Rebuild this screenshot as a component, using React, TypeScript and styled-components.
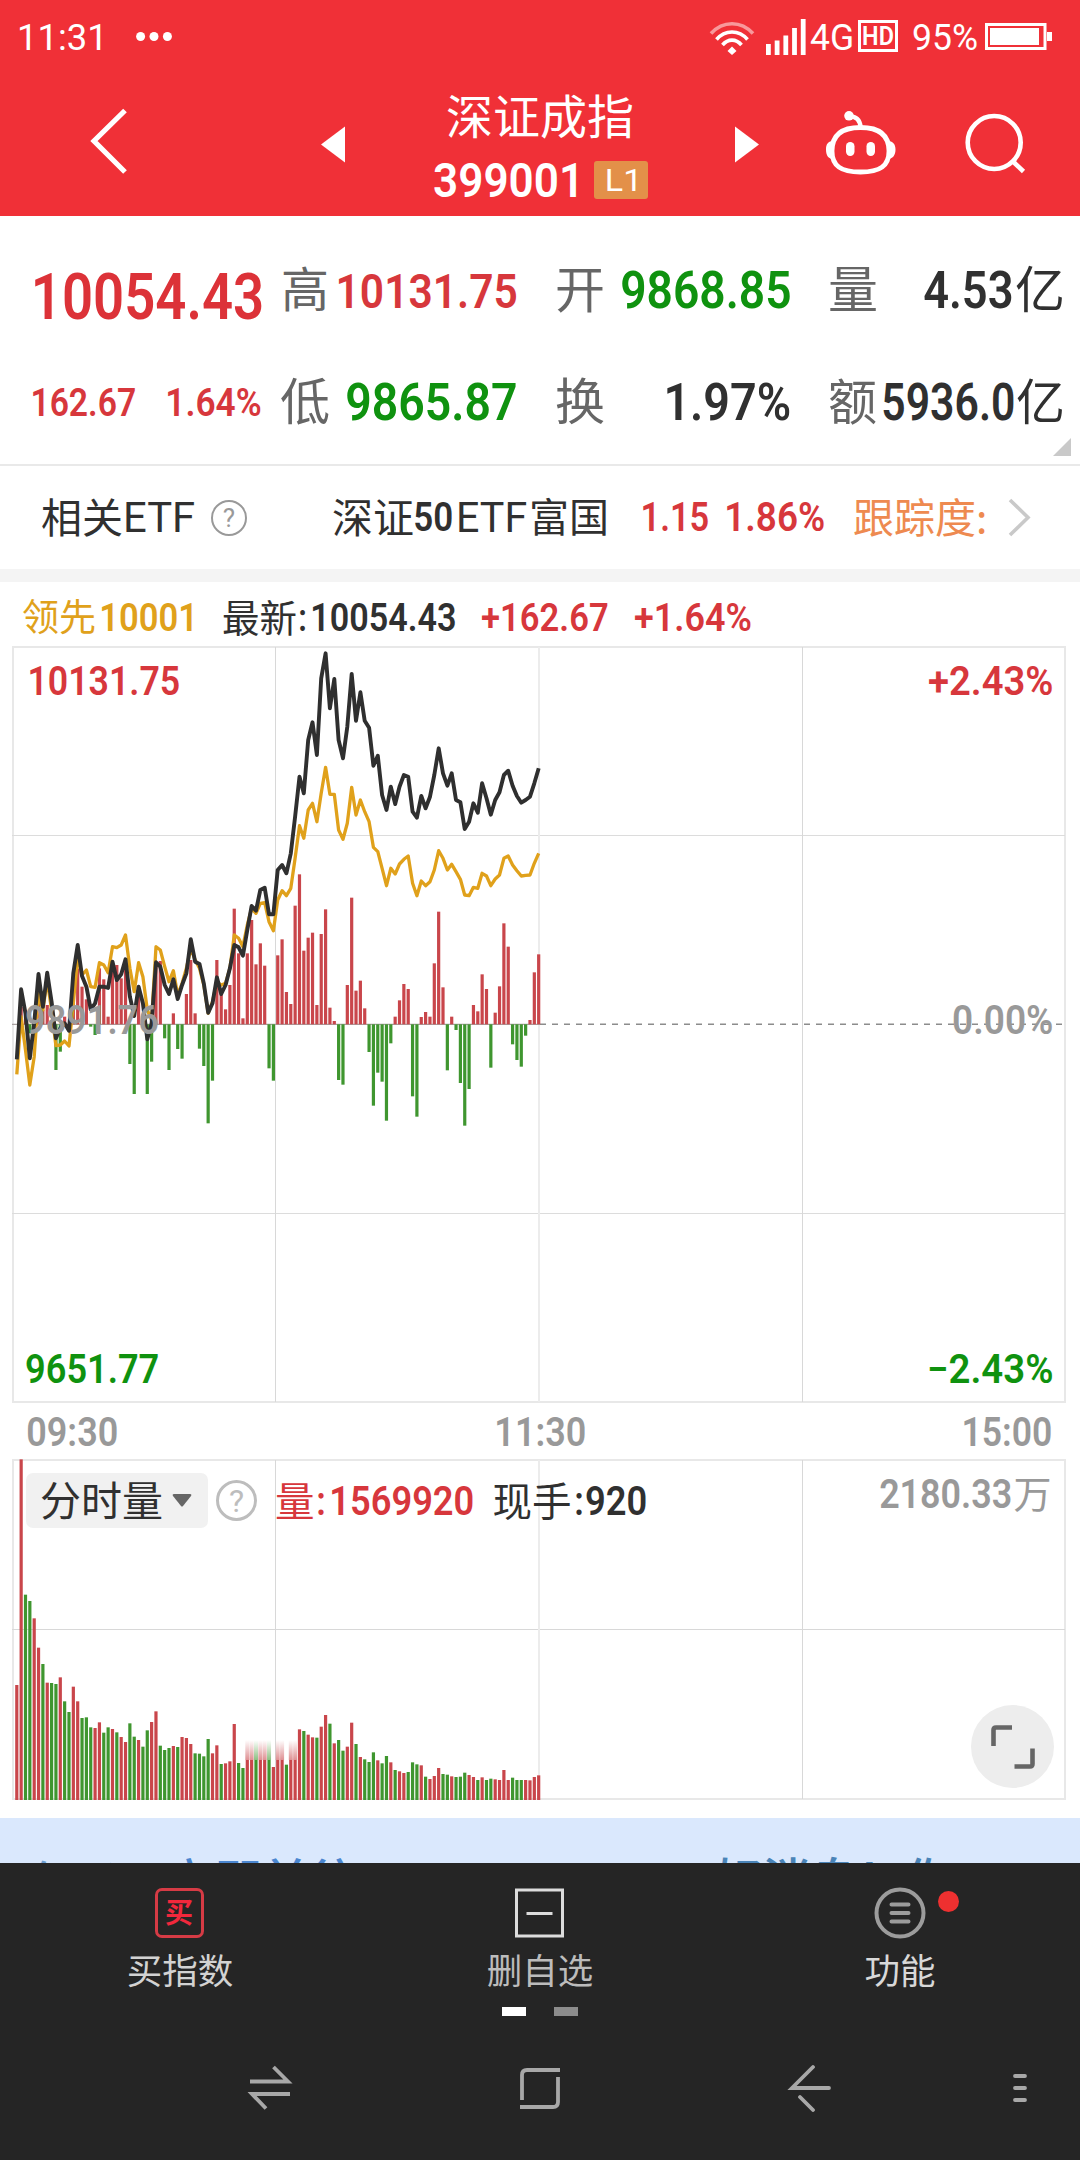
import React, { useMemo } from 'react';
import styled, { createGlobalStyle } from 'styled-components';

const RED = '#d7373c';
const GREEN = '#0f920f';
const INK = '#303030';
const GREY = '#999999';
const BAR_UP = '#c9464b';
const BAR_DOWN = '#3f962f';
const GOLD = '#e0a11b';

const Global = createGlobalStyle`
  * { box-sizing: border-box; }
  body { margin: 0; background: #ffffff; font-family: Roboto, "Noto Sans CJK SC", sans-serif; }
`;

/* ---------- text primitives ---------- */

const FitBox = styled.span<{ $w: number; $size: number; $ml: number; $mt: number; $color: string; $weight: number }>`
  display: block;
  flex: none;
  width: ${p => p.$w}px;
  height: ${p => p.$size}px;
  line-height: ${p => p.$size}px;
  margin-left: ${p => p.$ml}px;
  margin-top: ${p => p.$mt}px;
  font-family: Roboto, sans-serif;
  font-size: ${p => p.$size}px;
  font-weight: ${p => p.$weight};
  color: ${p => p.$color};
  white-space: nowrap;
`;
const FitInner = styled.span`
  display: inline-block;
  transform-origin: 0 50%;
`;

interface NumProps { children: string; w: number; size: number; color?: string; weight?: number; ml?: number; mt?: number }

/* Condensed figures: the glyph run is squeezed so that its ink spans exactly w pixels. */
function Num({ children, w, size, color = INK, weight = 600, ml = 0, mt = 0 }: NumProps) {
  const transform = useMemo(() => {
    const ctx = document.createElement('canvas').getContext('2d');
    if (!ctx) return 'none';
    ctx.font = `${weight} ${size}px Roboto, sans-serif`;
    const m = ctx.measureText(children);
    const ink = m.actualBoundingBoxLeft + m.actualBoundingBoxRight;
    const s = w / ink;
    return `translateX(${m.actualBoundingBoxLeft * s}px) scaleX(${s})`;
  }, [children, w, size, weight]);
  return (
    <FitBox $w={w} $size={size} $ml={ml} $mt={mt} $color={color} $weight={weight}>
      <FitInner style={{ transform }}>{children}</FitInner>
    </FitBox>
  );
}

const Han = styled.span<{ $size: number; $color?: string; $ml?: number; $lift?: number; $weight?: number }>`
  flex: none;
  font-family: "Noto Sans CJK SC", sans-serif;
  font-size: ${p => p.$size}px;
  line-height: ${p => p.$size}px;
  font-weight: ${p => p.$weight ?? 400};
  color: ${p => p.$color ?? INK};
  margin-left: ${p => p.$ml ?? 0}px;
  margin-bottom: calc(0.11em + ${p => p.$lift ?? 0}px);
  white-space: nowrap;
`;

/* ---------- header ---------- */

const Screen = styled.div`
  width: 1080px;
  height: 2160px;
  display: flex;
  flex-direction: column;
  overflow: hidden;
  background: #ffffff;
`;
const Header = styled.header`
  height: 216px;
  flex: none;
  background: #f03037;
  color: #fff;
`;
const StatusBar = styled.div`
  height: 74px;
  display: flex;
  align-items: center;
  padding-left: 20px;
`;
const StatusIcon = styled.svg<{ $ml: number }>`
  display: block;
  flex: none;
  margin-left: ${p => p.$ml}px;
`;
const HdBadge = styled.span`
  width: 40px;
  height: 32px;
  margin: 0 0 2px 6px;
  flex: none;
  border: 3px solid #fff;
  display: flex;
  align-items: center;
  justify-content: center;
`;
const TitleBar = styled.div`
  height: 142px;
  display: flex;
  align-items: flex-start;
`;
const TitleIcon = styled.svg<{ $ml: number; $mt: number }>`
  display: block;
  flex: none;
  margin-left: ${p => p.$ml}px;
  margin-top: ${p => p.$mt}px;
`;
const TitleBlock = styled.div`
  width: 214px;
  margin-left: 88px;
  padding-top: 15px;
  display: flex;
  flex-direction: column;
`;
const TitleName = styled.div`
  height: 54px;
  display: flex;
  align-items: center;
  padding-left: 12px;
`;
const TitleCode = styled.div`
  height: 38px;
  margin-top: 18px;
  display: flex;
  align-items: center;
`;
const LevelBadge = styled.span`
  width: 54px;
  height: 38px;
  margin-left: 18px;
  border-radius: 3px;
  background: #e39049;
  display: flex;
  align-items: center;
  padding-left: 13px;
`;

/* ---------- quote ---------- */

const Quote = styled.section`
  position: relative;
  height: 250px;
  flex: none;
  padding-top: 20px;
  border-bottom: 2px solid #e9e9e9;
`;
const QuoteRow = styled.div`
  height: 110px;
  display: grid;
  grid-template-columns: 262px 254px 274px 275px;
`;
const QuoteCell = styled.div<{ $pl: number }>`
  display: flex;
  align-items: center;
  padding-left: ${p => p.$pl}px;
`;
const CellValue = styled.div`
  margin-left: auto;
  display: flex;
  align-items: center;
`;
const ExpandCorner = styled.i`
  position: absolute;
  right: 9px;
  bottom: 8px;
  border-style: solid;
  border-width: 0 0 18px 18px;
  border-color: transparent transparent #c9c9c9 transparent;
`;

/* ---------- related fund ---------- */

const FundRow = styled.section`
  height: 103px;
  flex: none;
  display: flex;
  align-items: center;
  padding-left: 41px;
`;
const HelpMark = styled.span<{ $d: number; $bw: number; $c: string; $fs: number; $ml: number }>`
  flex: none;
  width: ${p => p.$d}px;
  height: ${p => p.$d}px;
  margin-left: ${p => p.$ml}px;
  border: ${p => p.$bw}px solid ${p => p.$c};
  border-radius: 50%;
  color: ${p => p.$c};
  font: 400 ${p => p.$fs}px/1 Roboto, sans-serif;
  display: flex;
  align-items: center;
  justify-content: center;
`;
const Divider = styled.div`
  height: 13px;
  flex: none;
  background: #f4f4f4;
`;

/* ---------- charts ---------- */

const Legend = styled.div`
  height: 64px;
  flex: none;
  display: flex;
  align-items: center;
  padding: 7px 0 0 21px;
`;
const PriceChart = styled.section`
  position: relative;
  height: 757px;
  flex: none;
`;
const Plot = styled.svg`
  display: block;
`;
const ScaleOverlay = styled.div`
  position: absolute;
  inset: 0;
  padding: 15px 28px 13px 26px;
  display: flex;
  flex-direction: column;
  justify-content: space-between;
`;
const ScaleLine = styled.div<{ $lift?: number }>`
  display: flex;
  align-items: center;
  justify-content: space-between;
  height: 41px;
  padding-bottom: ${p => p.$lift ?? 0}px;
`;
const TimeAxis = styled.div`
  height: 56px;
  flex: none;
  display: flex;
  align-items: center;
  padding-left: 28px;
  padding-top: 2px;
`;
const VolumeChart = styled.section`
  position: relative;
  height: 359px;
  flex: none;
`;
const VolumeHead = styled.div`
  position: absolute;
  left: 0;
  right: 0;
  top: 14px;
  height: 55px;
  display: flex;
  align-items: center;
  padding-left: 26px;
`;
const MetricChip = styled.button`
  flex: none;
  width: 182px;
  height: 55px;
  border: 0;
  border-radius: 7px;
  background: #f1f1f1;
  display: flex;
  align-items: center;
  padding: 0 0 0 14px;
`;
const FullScreen = styled.button`
  position: absolute;
  right: 26px;
  top: 246px;
  width: 83px;
  height: 83px;
  padding: 0;
  border: 0;
  border-radius: 50%;
  background: #ededed;
  display: flex;
  align-items: center;
  justify-content: center;
`;

/* ---------- promo strip and bottom bars ---------- */

const Promo = styled.section`
  height: 45px;
  flex: none;
  overflow: hidden;
  background: #dae8fd;
  display: flex;
  align-items: flex-start;
  padding: 36px 0 0 30px;
`;
const PromoText = styled.span<{ $w: number; $size: number; $c: string; $mt?: number }>`
  flex: none;
  width: ${p => p.$w}px;
  margin-top: ${p => p.$mt ?? 0}px;
  font: 500 ${p => p.$size}px/1 "Noto Sans CJK SC", sans-serif;
  color: ${p => p.$c};
  white-space: nowrap;
`;
const BottomBar = styled.nav`
  height: 180px;
  flex: none;
  background: #252525;
  display: flex;
  flex-direction: column;
`;
const Tabs = styled.div`
  height: 144px;
  display: grid;
  grid-template-columns: repeat(3, 360px);
`;
const Tab = styled.div`
  display: flex;
  flex-direction: column;
  align-items: center;
  padding-top: 23px;
`;
const TabIcon = styled.div`
  position: relative;
  height: 54px;
  display: flex;
  align-items: center;
  justify-content: center;
`;
const TabLabel = styled.span<{ $c: string }>`
  margin-top: 11px;
  font: 400 35.5px/36px "Noto Sans CJK SC", sans-serif;
  color: ${p => p.$c};
`;
const BuyBox = styled.span`
  width: 49px;
  height: 50px;
  margin-right: 2px;
  border: 3px solid #d63b45;
  border-radius: 7px;
  display: flex;
  align-items: center;
  justify-content: center;
`;
const RedDot = styled.i`
  position: absolute;
  left: 64px;
  top: 5px;
  width: 21px;
  height: 21px;
  border-radius: 50%;
  background: #ee3030;
`;
const Pager = styled.div`
  display: flex;
  justify-content: center;
  gap: 28px;
`;
const PagerDash = styled.i<{ $c: string }>`
  width: 24px;
  height: 9px;
  background: ${p => p.$c};
`;
const SystemNav = styled.nav`
  height: 117px;
  flex: none;
  background: #252525;
  display: flex;
  align-items: flex-start;
  padding-left: 246px;
`;
const NavIcon = styled.svg<{ $ml: number }>`
  display: block;
  flex: none;
  margin-left: ${p => p.$ml}px;
  margin-top: 21px;
`;

/* ---------- data, in thirds of a pixel ---------- */

const PRICE = [1258,1048,1120,1255,1150,1002,1100,998,1085,1195,1165,1150,1172,1000,915,1008,1040,1108,1090,1040,1040,1044,965,1020,1003,958,1070,1128,1040,1090,1198,1150,967,980,1035,1062,1018,1077,1035,1000,898,965,972,1030,1118,1090,1012,1062,1035,985,915,922,947,870,798,812,750,743,823,823,690,675,700,640,530,410,460,300,247,345,115,40,205,117,300,355,260,102,242,157,242,263,377,347,465,510,440,492,440,405,410,515,533,468,505,470,405,325,400,437,400,480,487,567,545,490,518,430,475,524,480,457,405,392,437,468,488,480,470,430,385];
const LEAD = [1303,1130,1230,1335,1250,1060,1110,1020,1110,1217,1215,1203,1218,1090,950,1005,990,1040,1042,968,975,998,920,923,915,885,985,1055,968,1010,1110,1140,920,930,980,1025,992,1065,1030,985,925,960,985,1035,1120,1085,1025,1035,1030,985,885,895,920,855,805,820,790,788,845,872,780,752,767,745,655,557,595,510,490,545,460,382,463,463,570,598,550,442,525,480,515,545,622,635,685,737,685,702,672,658,648,730,767,723,737,725,690,632,655,690,673,695,718,765,767,742,745,700,708,737,717,705,655,648,675,692,708,706,705,670,640];
const FLOW = [1153,1100,1130,1180,1140,1050,1110,1095,1140,1290,1235,1130,1153,1080,985,1040,1078,1160,1185,985,1018,1130,980,975,1015,985,1272,1362,1070,1153,1362,1265,970,963,1195,1290,1120,1227,1256,1062,960,1120,1226,1278,1450,1322,960,1060,1108,1035,806,940,1135,940,840,973,910,977,1285,1322,946,898,1056,1092,797,703,932,893,878,1095,882,808,1103,1143,1320,1334,1035,773,1052,1022,1105,1236,1397,1298,1325,1442,1210,1130,1081,1032,1047,1369,1430,1131,1116,1130,970,815,1042,1291,1130,1170,1329,1457,1347,1095,1114,1003,1047,1283,1118,1039,850,920,1213,1260,1280,1187,1140,997,943];
const VOLUME = [345,1022,616,597,545,457,408,352,351,348,368,296,264,340,296,246,248,218,216,233,202,218,213,203,189,174,230,190,180,160,209,234,266,163,150,156,162,159,189,186,168,140,139,131,183,140,164,108,110,116,228,111,96,120,120,120,120,120,120,99,120,120,106,120,120,212,207,196,188,187,220,255,229,170,180,148,160,232,168,129,122,114,143,119,110,132,113,90,86,81,84,113,107,104,70,63,72,96,78,76,71,69,70,82,75,69,60,68,60,64,62,60,90,60,67,60,60,60,59,69,74];
const SIDE = 'rrggrrgrggrggrrgggrrggrgrrggrggrrgggrgrrrggggrrgrrrggrrgrrgrrrgrrrgrrgrrgrggrrgrgggrggrgrrgggrgrrrggrgggrrgrggrrrrgggrrrr'.split('');
const FADED = new Set([53, 54, 55, 56, 57, 58, 60, 61, 63, 64]);
const GRID_X = [275.5, 802.5];
const ORIGIN = 6;

const px = (i: number) => 16.8 + i * 4.349;
const line = (ys: number[]) => ys.map((y, i) => `${px(i).toFixed(1)},${(y / 3 - ORIGIN).toFixed(1)}`).join(' ');

function PricePlot() {
  const zero = 378.3;
  return (
    <Plot width="1080" height="757" viewBox="0 0 1080 757" fill="none">
      <rect x="13" y="1" width="1052" height="755" stroke="#e8e8e8" strokeWidth="2" />
      <path d="M12 189.5H1065M12 567.5H1065" stroke="#dcdcdc" />
      {GRID_X.map(x => <path key={x} d={`M${x} 1V756`} stroke="#d8d8d8" />)}
      <path d="M539 1V756" stroke="#ececec" strokeWidth="2" />
      <path d={`M12 ${zero}H540`} stroke="#a8a0a0" strokeWidth="1.2" />
      <path d={`M540 ${zero}H1064`} stroke="#8c8c8c" strokeWidth="1.6" strokeDasharray="6 6" />
      {FLOW.map((v, i) => {
        const y = v / 3 - ORIGIN;
        return v === 1153 ? null : (
          <rect key={i} x={px(i) - 1.6} width="3.2" y={Math.min(y, zero)} height={Math.abs(zero - y)} fill={y < zero ? BAR_UP : BAR_DOWN} />
        );
      })}
      <polyline points={line(LEAD)} stroke={GOLD} strokeWidth="3.3" strokeLinejoin="round" />
      <polyline points={line(PRICE)} stroke="#2f2f2f" strokeWidth="3.9" strokeLinejoin="round" />
    </Plot>
  );
}

function VolumePlot() {
  return (
    <Plot width="1080" height="342" viewBox="0 0 1080 342" fill="none">
      <defs>
        {[['r', BAR_UP], ['g', BAR_DOWN]].map(([id, c]) => (
          <linearGradient key={id} id={`fade-${id}`} x1="0" y1="0" x2="0" y2="1">
            <stop offset="0" stopColor={c} stopOpacity="0" />
            <stop offset="1" stopColor={c} stopOpacity="0.6" />
          </linearGradient>
        ))}
      </defs>
      <rect x="13" y="1" width="1052" height="339" stroke="#e8e8e8" strokeWidth="2" />
      <path d="M12 170.5H1065" stroke="#d8d8d8" />
      {GRID_X.map(x => <path key={x} d={`M${x} 1V340`} stroke="#d8d8d8" />)}
      <path d="M539 1V340" stroke="#ececec" strokeWidth="2" />
      {VOLUME.map((v, i) => (
        <rect key={i} x={px(i) - 1.6} width="3.2" y={341 - v / 3} height={v / 3} fill={SIDE[i] === 'r' ? BAR_UP : BAR_DOWN} />
      ))}
      {[...FADED].map(i => (
        <rect key={i} x={px(i) - 2} width="4" y={281} height={20} fill={`url(#fade-${SIDE[i]})`} />
      ))}
    </Plot>
  );
}

function StatusIcons() {
  return (
    <>
      <StatusIcon $ml={537} width="46" height="36" viewBox="0 0 46 36" fill="none" stroke="#fff" strokeWidth="3.6">
        <path d="M2 14.5C14 1.500 32 1.500 44 14.500" opacity=".5" />
        <path d="M7.500 20.500C16 10.500 30 10.500 38.500 20.500" />
        <path d="M13.500 26C19 19.500 27 19.500 32.500 26" />
        <path d="M23 27.500L27.500 32 23 36 18.500 32Z" fill="#fff" stroke="none" />
      </StatusIcon>
      <StatusIcon $ml={11} width="40" height="36" viewBox="0 0 40 36" fill="#fff">
        <path d="M0 25h4.800v11H0zM8.700 21.500h4.800V36H8.700zM17.400 16.500h4.800V36h-4.800zM26.100 9h4.800v27h-4.800zM34.800 0h4.800v36h-4.800z" />
      </StatusIcon>
    </>
  );
}

export default function App() {
  return (
    <Screen>
      <Global />
      <Header>
        <StatusBar>
          <Num w={81} size={37} color="#fff" weight={400}>11:31</Num>
          <StatusIcon $ml={35} width="36" height="10" viewBox="0 0 36 10" fill="#fff">
            <circle cx="4.600" cy="4.500" r="4.500" /><circle cx="18" cy="4.500" r="4.500" /><circle cx="31.400" cy="4.500" r="4.500" />
          </StatusIcon>
          <StatusIcons />
          <Num w={42} size={37} color="#fff" weight={400} ml={4}>4G</Num>
          <HdBadge><Num w={30} size={26} color="#fff" weight={600}>HD</Num></HdBadge>
          <Num w={64} size={37} color="#fff" weight={400} ml={15}>95%</Num>
          <StatusIcon $ml={8} width="68" height="28" viewBox="0 0 68 28" fill="none">
            <rect x="1.500" y="1.500" width="58.500" height="24" stroke="#fff" strokeWidth="3" />
            <path d="M5 5h49v17H5zM62 9h5v9h-5z" fill="#fff" />
          </StatusIcon>
        </StatusBar>
        <TitleBar>
          <TitleIcon $ml={89} $mt={33} width="40" height="68" viewBox="0 0 40 68" fill="none">
            <path d="M36 3.500L5 34 36 65" stroke="#fff" strokeWidth="5.200" />
          </TitleIcon>
          <TitleIcon $ml={192} $mt={52} width="25" height="37" viewBox="0 0 25 37" fill="#fff">
            <path d="M0 18.500L24 .500v36z" />
          </TitleIcon>
          <TitleBlock>
            <TitleName><Han $size={47} $color="#fff">深证成指</Han></TitleName>
            <TitleCode>
              <Num w={142} size={49} color="#fff">399001</Num>
              <LevelBadge><Num w={29} size={32} color="#fff" weight={400}>L1</Num></LevelBadge>
            </TitleCode>
          </TitleBlock>
          <TitleIcon $ml={87} $mt={52} width="25" height="37" viewBox="0 0 25 37" fill="#fff">
            <path d="M24 18.500L0 .500v36z" />
          </TitleIcon>
          <TitleIcon $ml={65} $mt={36} width="72" height="68" viewBox="0 0 72 68" fill="none">
            <path d="M35.500 17.500C55 17.500 64 26 64 41S55 62 35.500 62 7 56 7 41 16 17.500 35.500 17.500Z" stroke="#fff" strokeWidth="4.800" />
            <path d="M24 6.500C31 6 35 10 35.500 17" stroke="#fff" strokeWidth="4.500" />
            <circle cx="24" cy="5.800" r="4.800" fill="#fff" />
            <rect x="21" y="32" width="8.500" height="14" rx="4.200" fill="#fff" />
            <rect x="41.500" y="32" width="8.500" height="14" rx="4.200" fill="#fff" />
            <path d="M7.500 31C3 31.500 1 34 1 39.500S3 48.500 7.500 49ZM63.500 31C68 31.500 70.500 34 70.500 39.500S68 48.500 63.500 49Z" fill="#fff" />
          </TitleIcon>
          <TitleIcon $ml={67} $mt={36} width="64" height="66" viewBox="0 0 64 66" fill="none" stroke="#fff" strokeWidth="4.600">
            <circle cx="30.200" cy="32.500" r="26.500" />
            <path d="M48.500 51L59.500 61.500" />
          </TitleIcon>
        </TitleBar>
      </Header>

      <Quote>
        <QuoteRow>
          <QuoteCell $pl={35}><Num w={227} size={64} color="#dc3238" mt={14} weight={650}>10054.43</Num></QuoteCell>
          <QuoteCell $pl={19}><Han $size={48} $color="#666" $lift={4}>高</Han><CellValue><Num w={177} size={49} color={RED}>10131.75</Num></CellValue></QuoteCell>
          <QuoteCell $pl={39}><Han $size={50} $color="#666" $lift={4}>开</Han><CellValue><Num w={168} size={52} color={GREEN} weight={650}>9868.85</Num></CellValue></QuoteCell>
          <QuoteCell $pl={38}><Han $size={50} $color="#666" $lift={4}>量</Han><CellValue><Num w={88} size={52} weight={650}>4.53</Num><Han $size={50} $ml={3} $lift={4}>亿</Han></CellValue></QuoteCell>
        </QuoteRow>
        <QuoteRow>
          <QuoteCell $pl={33}><Num w={102} size={39} color={RED} mt={5}>162.67</Num><Num w={93} size={39} color={RED} ml={33} mt={5}>1.64%</Num></QuoteCell>
          <QuoteCell $pl={18}><Han $size={50} $color="#666">低</Han><CellValue><Num w={169} size={52} color={GREEN} weight={650} mt={3}>9865.87</Num></CellValue></QuoteCell>
          <QuoteCell $pl={39}><Han $size={50} $color="#666">换</Han><CellValue><Num w={123} size={52} mt={3}>1.97%</Num></CellValue></QuoteCell>
          <QuoteCell $pl={38}><Han $size={49} $color="#666">额</Han><CellValue><Num w={131} size={52} mt={3}>5936.0</Num><Han $size={49} $ml={2}>亿</Han></CellValue></QuoteCell>
        </QuoteRow>
        <ExpandCorner />
      </Quote>

      <FundRow>
        <Han $size={41}>相关</Han>
        <Num w={68} size={42} weight={400} ml={3}>ETF</Num>
        <HelpMark $d={36} $bw={2} $c="#999" $fs={26} $ml={17}>?</HelpMark>
        <Han $size={41} $ml={85}>深证</Han>
        <Num w={37} size={41} ml={1}>50</Num>
        <Num w={67} size={42} weight={400} ml={7}>ETF</Num>
        <Han $size={40} $ml={3}>富国</Han>
        <Num w={65} size={41} color={RED} ml={34}>1.15</Num>
        <Num w={97} size={41} color={RED} ml={19}>1.86%</Num>
        <Han $size={41} $color="#ee8a50" $ml={29}>跟踪度:</Han>
        <StatusIcon $ml={21} width="24" height="40" viewBox="0 0 24 40" fill="none">
          <path d="M2 2L20 19.500 2 37" stroke="#c9c9c9" strokeWidth="3.600" />
        </StatusIcon>
      </FundRow>
      <Divider />

      <Legend>
        <Han $size={37} $color={GOLD} $ml={1}>领先</Han>
        <Num w={90} size={38} color={GOLD} ml={6}>10001</Num>
        <Han $size={37.5} $ml={30}>最新</Han>
        <Num w={5} size={38} ml={3}>:</Num>
        <Num w={142} size={38} ml={8}>10054.43</Num>
        <Num w={126} size={38} color={RED} ml={27}>+162.67</Num>
        <Num w={116} size={38} color={RED} ml={27}>+1.64%</Num>
      </Legend>

      <PriceChart>
        <PricePlot />
        <ScaleOverlay>
          <ScaleLine><Num w={149} size={41} color={RED} ml={4}>10131.75</Num><Num w={123} size={40} color={RED}>+2.43%</Num></ScaleLine>
          <ScaleLine $lift={9}><Num w={132} size={40} color={GREY}>9891.76</Num><Num w={99} size={40} color={GREY}>0.00%</Num></ScaleLine>
          <ScaleLine><Num w={132} size={41} color={GREEN}>9651.77</Num><Num w={123} size={40} color={GREEN}>−2.43%</Num></ScaleLine>
        </ScaleOverlay>
      </PriceChart>
      <TimeAxis>
        <Num w={89} size={41} color={GREY}>09:30</Num>
        <Num w={88} size={41} color={GREY} ml={380}>11:30</Num>
        <Num w={87} size={41} color={GREY} ml={379}>15:00</Num>
      </TimeAxis>

      <VolumeChart>
        <VolumePlot />
        <VolumeHead>
          <MetricChip>
            <Han $size={41}>分时量</Han>
            <StatusIcon $ml={9} width="20" height="13" viewBox="0 0 20 13" fill="#666"><path d="M2 0h16q2 0 1 2L11 12q-1 1-2 0L1 2Q0 0 2 0z" /></StatusIcon>
          </MetricChip>
          <HelpMark $d={41} $bw={3} $c="#bdbdbd" $fs={32} $ml={8}>?</HelpMark>
          <Han $size={39.5} $color={RED} $ml={18}>量</Han>
          <Num w={6} size={41} color={RED} ml={3} mt={2}>:</Num>
          <Num w={141} size={41} color={RED} ml={8} mt={2}>1569920</Num>
          <Han $size={39.5} $ml={20}>现手</Han>
          <Num w={6} size={41} ml={4} mt={2}>:</Num>
          <Num w={60} size={41} ml={4} mt={2}>920</Num>
          <Num w={131} size={41} color={GREY} ml={234} mt={-12}>2180.33</Num>
          <Han $size={38} $color={GREY} $ml={3} $lift={12}>万</Han>
        </VolumeHead>
        <FullScreen>
          <svg width="44" height="44" viewBox="0 0 44 44" fill="none" stroke="#666" strokeWidth="4.600">
            <path d="M2.500 21V5q0-2.500 2.500-2.500H21M23.500 41.500H39q2.500 0 2.500-2.500V23.500" />
          </svg>
        </FullScreen>
      </VolumeChart>

      <Promo>
        <PromoText $w={136} $size={43} $c="#6a9cd0" $mt={3}>仅买</PromoText>
        <PromoText $w={549} $size={48} $c="#4a86d0">立即前往</PromoText>
        <PromoText $w={240} $size={47.5} $c="#4a84b8">好消息！你</PromoText>
      </Promo>

      <BottomBar>
        <Tabs>
          <Tab>
            <TabIcon><BuyBox><Han $size={28} $weight={700} $color="#f2283c">买</Han></BuyBox></TabIcon>
            <TabLabel $c="#d2d2d2">买指数</TabLabel>
          </Tab>
          <Tab>
            <TabIcon>
              <svg width="50" height="50" viewBox="0 0 50 50" fill="none" stroke="#dcdcdc" strokeWidth="3">
                <path d="M1.500 2h46v46h-46zM11.500 25.500h26" />
              </svg>
            </TabIcon>
            <TabLabel $c="#bcbcbc">删自选</TabLabel>
          </Tab>
          <Tab>
            <TabIcon>
              <svg width="52" height="52" viewBox="0 0 52 52" fill="none" stroke="#9c9c9c" strokeWidth="4">
                <circle cx="26" cy="26" r="23.500" />
                <path d="M17.500 17.500h17M17.500 26h17M17.500 34.500h17" strokeLinecap="round" />
              </svg>
              <RedDot />
            </TabIcon>
            <TabLabel $c="#d8d8d8">功能</TabLabel>
          </Tab>
        </Tabs>
        <Pager><PagerDash $c="#ffffff" /><PagerDash $c="#8c8c8c" /></Pager>
      </BottomBar>
      <SystemNav>
        <NavIcon $ml={0} width="48" height="48" viewBox="0 0 48 48" fill="none" stroke="#a8a8a8" strokeWidth="3.800">
          <path d="M4 17.500H42L27.500 3M44 30H6L20 44.500" />
        </NavIcon>
        <NavIcon $ml={222} width="48" height="48" viewBox="0 0 48 48" fill="none" stroke="#a8a8a8" strokeWidth="3.800">
          <path d="M6 36V11Q6 6 11 6H44M4 43H37Q42 43 42 38V13" />
        </NavIcon>
        <NavIcon $ml={222} width="48" height="48" viewBox="0 0 48 48" fill="none" stroke="#a8a8a8" strokeWidth="3.800" strokeLinecap="round">
          <path d="M43 24H6L27 3M14 33L27 46" />
        </NavIcon>
        <NavIcon $ml={178} width="20" height="48" viewBox="0 0 20 48" fill="none" stroke="#a8a8a8" strokeWidth="3.800" strokeLinecap="round">
          <path d="M3 12H13M3 24H13M3 36H13" />
        </NavIcon>
      </SystemNav>
    </Screen>
  );
}
